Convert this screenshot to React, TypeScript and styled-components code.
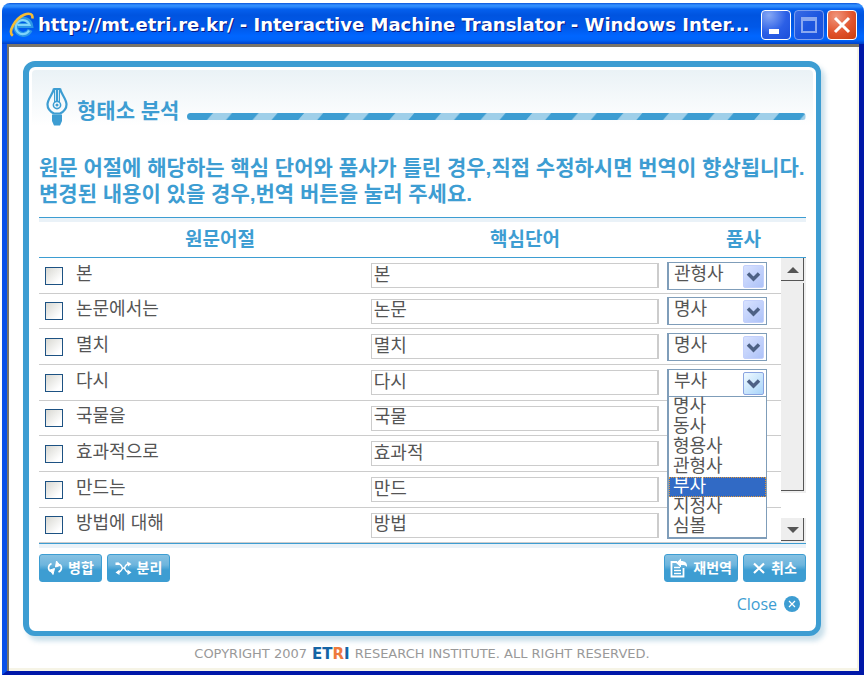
import React, { useState } from "react";
import styled, { createGlobalStyle, css } from "styled-components";

const blue = "#3d9dd2";
const korean = `"Liberation Sans", "Noto Sans CJK KR", sans-serif`;

const GlobalStyle = createGlobalStyle`
  *, *::before, *::after { box-sizing: border-box; }
  body { margin: 0; background: #fff; font-family: ${korean}; color: #555; }
  button, input, select { font: inherit; color: inherit; }
`;

const Window = styled.div`
  display: flex;
  flex-direction: column;
  min-height: 100vh;
  padding: 3px 0 0 2px;
`;

const TitleBar = styled.header`
  display: flex;
  align-items: center;
  gap: 3px;
  height: 41px;
  padding: 2px 7px 0 7px;
  border-radius: 8px 8px 0 0;
  background: linear-gradient(
    #0a52d8 0,
    #3290ff 2px,
    #2a86fa 4px,
    #0560ee 6px,
    #0054e0 12px,
    #0058e8 24px,
    #0066ff 33px,
    #0064fa 37px,
    #0040c8 41px
  );
`;

const WindowTitle = styled.h1`
  flex: 1;
  min-width: 0;
  margin: 0;
  overflow: hidden;
  white-space: nowrap;
  font: bold 18px/28px "DejaVu Sans", sans-serif;
  color: #fff;
  text-shadow: 1px 1px 0 #0a1883;
`;

const CaptionButton = styled.button<{ $tone: "normal" | "dim" | "close" }>`
  flex: none;
  display: grid;
  place-items: center;
  width: 30px;
  height: 30px;
  padding: 0;
  border: 1px solid ${(p) => (p.$tone === "dim" ? "#7d9fee" : "#fff")};
  border-radius: 4px;
  background: ${(p) =>
    p.$tone === "close"
      ? "radial-gradient(circle at 30% 20%, #f0967c, #e1532c 55%, #c93c0e)"
      : p.$tone === "dim"
        ? "linear-gradient(135deg, #3a6be4, #1d56e0 50%, #1a53dc)"
        : "radial-gradient(circle at 25% 15%, #86a8f5, #2b5fe6 55%, #1c4fdb)"};
`;

const WindowBody = styled.main`
  flex: 1;
  border: solid #0018a8;
  border-width: 0 5px 4px 5px;
  border-left-color: #0a50e8;
  box-shadow: inset 2px 3px 0 #7a7468, inset -2px -3px 0 #f6f4e6;
  padding: 17px 38px 9px 16px;
`;

const Panel = styled.section`
  padding: 3px;
  border: solid ${blue};
  border-width: 6px 5px 5px 6px;
  border-radius: 12px;
  background: #fff;
  box-shadow: 4px 5px 5px rgba(61, 140, 180, 0.28);
`;

const PanelInner = styled.div`
  padding: 17px 7px 14px;
  border-radius: 4px;
  background: linear-gradient(#eaf2f6, #fff 56px);
`;

const Heading = styled.div`
  display: flex;
  align-items: center;
  height: 39px;
  padding-left: 7px;
`;

const HeadingText = styled.h2`
  margin: 0 8px 0 9px;
  padding-top: 8px;
  font: bold 21px/30px ${korean};
  white-space: nowrap;
  color: ${blue};
`;

const StripeBar = styled.svg`
  flex: 1;
  min-width: 0;
  height: 7px;
  margin-top: 20px;
  border-radius: 4px;
`;

const Notice = styled.p`
  margin: 29px 0 10px;
  font: bold 21px/26px ${korean};
  color: ${blue};
`;

const WordTable = styled.table`
  width: 100%;
  table-layout: fixed;
  border-spacing: 0;
  border-bottom: 1px solid ${blue};
`;

const HeadCell = styled.th<{ $shift: number }>`
  height: 41px;
  padding: 4px 0 0 ${(p) => p.$shift}px;
  border-top: 1px solid ${blue};
  border-bottom: 1px solid ${blue};
  box-shadow: inset 0 4px 0 #eaf2f8;
  font: bold 19px/24px ${korean};
  color: ${blue};
`;

const Row = styled.tr`
  height: 36px;
  &:nth-child(3n + 2) {
    height: 35px;
  }
`;

const Cell = styled.td`
  padding: 0 0 0 2px;
  border-bottom: 1px solid #ccc;
  vertical-align: middle;
`;

const WordLabel = styled.label`
  display: flex;
  align-items: center;
  gap: 13px;
  padding-left: 4px;
  font-size: 18px;
  line-height: 24px;
`;

const WordText = styled.span`
  padding-bottom: 4px;
`;

const Tick = styled.input`
  appearance: none;
  flex: none;
  width: 18px;
  height: 18px;
  margin: 0;
  border: 1px solid #1d5283;
  background: linear-gradient(135deg, #d8d8d2, #fff 80%);
  &:checked {
    background: #1d5283;
    box-shadow: inset 0 0 0 3px #fff;
  }
`;

const KeyInput = styled.input`
  display: block;
  width: calc(100% - 8px);
  height: 25px;
  padding: 0 2px 6px;
  border: 1px solid #ccc;
  border-right-width: 2px;
  background: #fff;
  font-size: 18px;
  line-height: 18px;
  outline: none;
`;

const SelectWrap = styled.div`
  position: relative;
  width: 100px;
  margin-left: -2px;
`;

const PartSelect = styled.select`
  appearance: none;
  display: block;
  width: 100%;
  height: 28px;
  padding: 0 24px 4px 5px;
  border: 1px solid #7f9db9;
  border-left-width: 2px;
  border-radius: 0;
  background: #fff;
  font-size: 18px;
  outline: none;
`;

const SelectArrow = styled.svg<{ $open: boolean }>`
  position: absolute;
  top: 3px;
  right: 3px;
  pointer-events: none;
  border: 1px solid ${(p) => (p.$open ? "#8aa4e0" : "#c3d0fb")};
  border-radius: 2px;
  background: ${(p) =>
    p.$open
      ? "linear-gradient(135deg, #f0faff, #a8d4fa)"
      : "linear-gradient(135deg, #d8e2ff, #adc2f8)"};
`;

const OptionList = styled.ul`
  position: absolute;
  z-index: 1;
  top: 27px;
  left: 0;
  width: 100%;
  margin: 0;
  padding: 0;
  list-style: none;
  border: 1px solid #7f9db9;
  border-left-width: 2px;
  background: #fff;
`;

const Option = styled.li<{ $active: boolean }>`
  height: 20px;
  padding-left: 4px;
  font-size: 18px;
  line-height: 18px;
  ${(p) =>
    p.$active &&
    css`
      background: #316ac5;
      color: #fff;
      outline: 1px dotted #e0973a;
      outline-offset: -1px;
    `}
`;

const ScrollCell = styled.td`
  padding: 0;
  vertical-align: top;
`;

const ScrollTrack = styled.div`
  display: flex;
  flex-direction: column;
  height: 285px;
`;

const ScrollButton = styled.button`
  flex: none;
  display: grid;
  place-items: center;
  height: 25px;
  padding: 0;
  border: solid #eee;
  border-width: 0 2px 2px 0;
  box-shadow: inset -1px -1px 0 #555;
  background: #eee;
`;

const ScrollThumb = styled.div`
  height: 210px;
  border: solid #eee;
  border-width: 0 2px 2px 0;
  box-shadow: inset -1px -1px 0 #555;
  background: #eee;
`;

const ScrollGap = styled.div`
  flex: 1;
`;

const Actions = styled.div`
  display: flex;
  gap: 5px;
  padding-top: 10px;
  box-shadow: inset 0 4px 0 #eaf2f8;
`;

const Spacer = styled.span`
  flex: 1;
`;

const ActionButton = styled.button`
  display: flex;
  align-items: center;
  justify-content: center;
  gap: 5px;
  min-width: 63px;
  height: 28px;
  padding: 0 5px;
  border: 1px solid ${blue};
  border-radius: 3px;
  background: linear-gradient(#86c1e2, #6db5dd 10px, ${blue} 15px);
  font: bold 14px/24px ${korean};
  color: #fff;
  white-space: nowrap;
`;

const CloseRow = styled.div`
  display: flex;
  justify-content: flex-end;
  padding: 12px 6px 0 0;
`;

const CloseLink = styled.a`
  display: flex;
  align-items: center;
  gap: 7px;
  font: 16px/20px "Open Sans", sans-serif;
  color: ${blue};
  text-decoration: none;
`;

const Copyright = styled.footer`
  display: flex;
  justify-content: center;
  gap: 5px;
  margin-top: 10px;
  font: 13px/16px "DejaVu Sans", sans-serif;
  color: #999;
`;

const Logo = styled.strong`
  font: bold 15px/16px "DejaVu Sans", sans-serif;
  color: #1464a5;
`;

const LogoAccent = styled.span`
  color: #ee7a3c;
`;

const BrowserIcon = () => (
  <svg width="26" height="26" viewBox="0 0 24 24" fill="none" aria-hidden="true">
    <path d="M19.500 16.500A7 7 0 1 1 20 12.500H8" stroke="#2b97e6" strokeWidth="4.600" />
    <path d="M18.500 17A6.500 6.500 0 1 1 19 12H8" stroke="#7fd4fb" strokeWidth="2" />
    <path d="M3.500 22C-1.500 18 6 6 14 2.500C19 .5 22.500 2 21.500 6" stroke="#f4bd35" strokeWidth="2.400" />
  </svg>
);

const PenIcon = () => (
  <svg width="22" height="39" viewBox="0 0 22 39" fill="none" aria-hidden="true">
    <path d="M8 1.500C7 7 1.500 12 1.500 17.500C1.500 21.500 4 24.500 8 26.500H14C18 24.500 20.500 21.500 20.500 17.500C20.500 12 15 7 14 1.500" stroke={blue} strokeWidth="2.200" />
    <path d="M7.500 1H14.500L14 6V15H8V6Z" fill={blue} />
    <path d="M9.500 3V14M12.500 3V14" stroke="#cfe6f3" strokeWidth="1" />
    <circle cx="11" cy="18" r="3.600" stroke={blue} strokeWidth="1.600" fill="#fff" />
    <circle cx="11" cy="18" r="1.600" fill={blue} />
    <path d="M6 27.500H16V34L14 38.500H8L6 34Z" fill={blue} />
  </svg>
);

const MergeIcon = () => (
  <svg width="16" height="16" viewBox="0 0 16 16" fill="none" aria-hidden="true">
    <path d="M4.500 3.500C.5 5.500.8 10 4 11.500M11.500 12C15.500 10 15.200 5.500 12 4.500" stroke="#fff" strokeWidth="1.600" />
    <path d="M3 10L7.500 8.500L6 14.500ZM13 5.500L8.500 7L9.500 1Z" fill="#fff" stroke="#fff" />
  </svg>
);

const SplitIcon = () => (
  <svg width="17" height="16" viewBox="0 0 17 16" fill="none" aria-hidden="true">
    <path d="M2 3.500C5 3.500 6.500 5 7.500 8C6.500 11 5 12.500 2 12.500M15 3.500C12 3.500 10.500 5 9.500 8C10.500 11 12 12.500 15 12.500M7 8H10" stroke="#fff" strokeWidth="1.400" />
    <path d="M12 1.500L16.500 4L13 6.500ZM12.500 9.500L16.500 12.500L12.500 15ZM4.500 9.500L.5 12.500L4.500 15ZM.5 2.500H4V5H.5Z" fill="#fff" />
  </svg>
);

const RetranslateIcon = () => (
  <svg width="18" height="20" viewBox="0 0 18 20" fill="none" aria-hidden="true">
    <path d="M7 4H1.500V18.500H13.500V10" stroke="#fff" strokeWidth="1.800" />
    <path d="M4 9.500H10M4 12.500H11M4 15.500H11" stroke="#fff" strokeWidth="1.400" />
    <path d="M6 5L11 .5V3C15 3 17.500 5 17 9C15.500 7 14 6.800 11 7V9.500Z" fill="#fff" />
  </svg>
);

const CancelIcon = () => (
  <svg width="14" height="14" viewBox="0 0 14 14" aria-hidden="true">
    <path d="M2 2.500L12 12M12 2.500L2 12" stroke="#fff" strokeWidth="2.200" />
  </svg>
);

const CloseIcon = () => (
  <svg width="16" height="16" viewBox="0 0 16 16" aria-hidden="true">
    <circle cx="8" cy="8" r="8" fill={blue} />
    <path d="M5 5L11 11M11 5L5 11" stroke="#fff" strokeWidth="1.200" />
  </svg>
);

const parts = ["명사", "동사", "형용사", "관형사", "부사", "지정사", "심볼"];

const words = [
  { source: "본", key: "본", part: "관형사" },
  { source: "논문에서는", key: "논문", part: "명사" },
  { source: "멸치", key: "멸치", part: "명사" },
  { source: "다시", key: "다시", part: "부사" },
  { source: "국물을", key: "국물", part: "명사" },
  { source: "효과적으로", key: "효과적", part: "명사" },
  { source: "만드는", key: "만드", part: "동사" },
  { source: "방법에 대해", key: "방법", part: "명사" },
];

const OPEN_ROW = 3;

const SourceColumn = styled.col`
  width: 43%;
`;

const PartColumn = styled.col`
  width: 114px;
`;

const ScrollColumn = styled.col`
  width: 25px;
`;

export default function App() {
  const [chosen, setChosen] = useState(words.map((w) => w.part));
  const choose = (row: number, part: string) =>
    setChosen((all) => all.map((p, i) => (i === row ? part : p)));

  return (
    <Window>
      <GlobalStyle />
      <TitleBar>
        <BrowserIcon />
        <WindowTitle>
          http://mt.etri.re.kr/ - Interactive Machine Translator - Windows Inter...
        </WindowTitle>
        <CaptionButton $tone="normal" aria-label="Minimize">
          <svg width="26" height="26"><rect x="6" y="17" width="10" height="5" fill="#fff" /></svg>
        </CaptionButton>
        <CaptionButton $tone="dim" aria-label="Maximize">
          <svg width="26" height="26" fill="none">
            <rect x="6" y="6" width="14" height="14" stroke="#8aa8f0" strokeWidth="2" />
            <path d="M5 7H21" stroke="#8aa8f0" strokeWidth="4" />
          </svg>
        </CaptionButton>
        <CaptionButton $tone="close" aria-label="Close window">
          <svg width="26" height="26"><path d="M6 6L20 20M20 6L6 20" stroke="#fff" strokeWidth="3" /></svg>
        </CaptionButton>
      </TitleBar>

      <WindowBody>
        <Panel>
          <PanelInner>
            <Heading>
              <PenIcon />
              <HeadingText>형태소 분석</HeadingText>
              <StripeBar aria-hidden="true">
                <defs>
                  <pattern id="stripes" width="45.6" height="7" patternUnits="userSpaceOnUse">
                    <rect width="45.6" height="7" fill={blue} />
                    <path d="M20 7L26 0H45L39 7Z" fill="#9fcfe9" />
                  </pattern>
                </defs>
                <rect width="100%" height="7" fill="url(#stripes)" />
              </StripeBar>
            </Heading>

            <Notice>
              원문 어절에 해당하는 핵심 단어와 품사가 틀린 경우,직접 수정하시면 번역이 향상됩니다.
              <br />
              변경된 내용이 있을 경우,번역 버튼을 눌러 주세요.
            </Notice>

            <WordTable>
              <colgroup>
                <SourceColumn />
                <col />
                <PartColumn />
                <ScrollColumn />
              </colgroup>
              <thead>
                <tr>
                  <HeadCell $shift={32} scope="col">원문어절</HeadCell>
                  <HeadCell $shift={14} scope="col">핵심단어</HeadCell>
                  <HeadCell $shift={14} scope="col" colSpan={2}>품사</HeadCell>
                </tr>
              </thead>
              <tbody>
                {words.map((word, row) => (
                  <Row key={word.source}>
                    <Cell>
                      <WordLabel>
                        <Tick type="checkbox" />
                        <WordText>{word.source}</WordText>
                      </WordLabel>
                    </Cell>
                    <Cell>
                      <KeyInput aria-label={`${word.source} 핵심단어`} defaultValue={word.key} />
                    </Cell>
                    <Cell>
                      <SelectWrap>
                        <PartSelect
                          aria-label={`${word.source} 품사`}
                          value={chosen[row]}
                          onChange={(e) => choose(row, e.target.value)}
                        >
                          {parts.map((part) => (
                            <option key={part}>{part}</option>
                          ))}
                        </PartSelect>
                        <SelectArrow $open={row === OPEN_ROW} width="21" height="23" viewBox="0 0 19 21" aria-hidden="true">
                          <path d="M4 7.500L9.500 13L15 7.500" fill="none" stroke="#4d6185" strokeWidth="3.500" />
                        </SelectArrow>
                        {row === OPEN_ROW && (
                          <OptionList role="listbox" aria-label={`${word.source} 품사`}>
                            {parts.map((part) => (
                              <Option
                                key={part}
                                role="option"
                                aria-selected={part === chosen[row]}
                                $active={part === chosen[row]}
                                onClick={() => choose(row, part)}
                              >
                                {part}
                              </Option>
                            ))}
                          </OptionList>
                        )}
                      </SelectWrap>
                    </Cell>
                    {row === 0 && (
                      <ScrollCell rowSpan={words.length}>
                        <ScrollTrack>
                          <ScrollButton aria-label="위로">
                            <svg width="12" height="6"><path d="M0 6L6 0L12 6Z" fill="#555" /></svg>
                          </ScrollButton>
                          <ScrollThumb />
                          <ScrollGap />
                          <ScrollButton aria-label="아래로">
                            <svg width="12" height="6"><path d="M0 0L6 6L12 0Z" fill="#555" /></svg>
                          </ScrollButton>
                        </ScrollTrack>
                      </ScrollCell>
                    )}
                  </Row>
                ))}
              </tbody>
            </WordTable>

            <Actions>
              <ActionButton><MergeIcon />병합</ActionButton>
              <ActionButton><SplitIcon />분리</ActionButton>
              <Spacer />
              <ActionButton><RetranslateIcon />재번역</ActionButton>
              <ActionButton><CancelIcon />취소</ActionButton>
            </Actions>

            <CloseRow>
              <CloseLink href="#close">Close <CloseIcon /></CloseLink>
            </CloseRow>
          </PanelInner>
        </Panel>

        <Copyright>
          <span>COPYRIGHT 2007</span>
          <Logo>ET<LogoAccent>R</LogoAccent>I</Logo>
          <span>RESEARCH INSTITUTE. ALL RIGHT RESERVED.</span>
        </Copyright>
      </WindowBody>
    </Window>
  );
}
